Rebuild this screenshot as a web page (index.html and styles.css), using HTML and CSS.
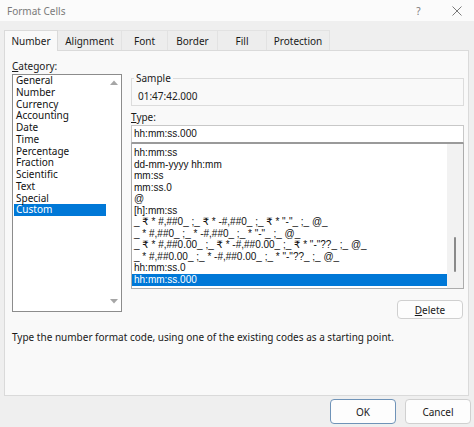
FILE: index.html
```html
<!DOCTYPE html>
<html>
<head>
<meta charset="utf-8">
<title>Format Cells</title>
<link rel="stylesheet" href="styles.css">
</head>
<body>
<div class="titlebar">
  <span class="title">Format Cells</span>
  <div class="tb-actions">
    <span class="tb-btn tb-help">?</span>
    <span class="tb-btn">
      <svg width="10" height="10" viewBox="0 0 10 10"><path d="M0.5 0.5 L9.5 9.5 M9.5 0.5 L0.5 9.5" stroke="#7a7a7a" stroke-width="1" fill="none"/></svg>
    </span>
  </div>
</div>
<div class="tabs">
  <div class="tab tab-active w-number">Number</div>
  <div class="tab w-align">Alignment</div>
  <div class="tab w-font">Font</div>
  <div class="tab w-border">Border</div>
  <div class="tab w-fill">Fill</div>
  <div class="tab w-prot">Protection</div>
</div>
<div class="panel">
  <div class="cols">
    <div class="left">
      <div class="label"><u>C</u>ategory:</div>
      <div class="catlist">
        <ul class="cat-items">
          <li>General</li>
          <li>Number</li>
          <li>Currency</li>
          <li>Accounting</li>
          <li>Date</li>
          <li>Time</li>
          <li>Percentage</li>
          <li>Fraction</li>
          <li>Scientific</li>
          <li>Text</li>
          <li>Special</li>
          <li class="sel">Custom</li>
        </ul>
        <div class="vscroll">
          <svg width="8" height="5" viewBox="0 0 8 5"><path d="M0 5 L4 0.5 L8 5 Z" fill="#a6a6a6"/></svg>
          <svg width="8" height="5" viewBox="0 0 8 5"><path d="M0 0 L4 4.5 L8 0 Z" fill="#a6a6a6"/></svg>
        </div>
      </div>
    </div>
    <div class="right">
      <fieldset class="sample">
        <legend>Sample</legend>
        <div class="sample-value">01:47:42.000</div>
      </fieldset>
      <div class="label type-label"><u>T</u>ype:</div>
      <div class="typeinput">hh:mm:ss.000</div>
      <div class="typelist">
        <ul class="type-items">
          <li>hh:mm:ss</li>
          <li>dd-mm-yyyy hh:mm</li>
          <li>mm:ss</li>
          <li>mm:ss.0</li>
          <li>@</li>
          <li>[h]:mm:ss</li>
          <li>_ ₹ * #,##0_ ;_ ₹ * -#,##0_ ;_ ₹ * "-"_ ;_ @_</li>
          <li>_ * #,##0_ ;_ * -#,##0_ ;_ * "-"_ ;_ @_</li>
          <li>_ ₹ * #,##0.00_ ;_ ₹ * -#,##0.00_ ;_ ₹ * "-"??_ ;_ @_</li>
          <li>_ * #,##0.00_ ;_ * -#,##0.00_ ;_ * "-"??_ ;_ @_</li>
          <li>hh:mm:ss.0</li>
          <li class="sel">hh:mm:ss.000</li>
        </ul>
        <div class="thin-track"><div class="thumb"></div></div>
      </div>
      <div class="btnrow">
        <button class="btn btn-delete"><u>D</u>elete</button>
      </div>
    </div>
  </div>
  <p class="help">Type the number format code, using one of the existing codes as a starting point.</p>
</div>
<div class="footer">
  <button class="btn btn-ok">OK</button>
  <button class="btn btn-cancel">Cancel</button>
</div>
</body>
</html>
```
FILE: styles.css
```css
* { box-sizing: border-box; }

body {
  margin: 0;
  width: 474px;
  height: 427px;
  overflow: hidden;
  background: #efefef;
  font-family: "Noto Sans", "Open Sans", sans-serif;
  font-size: 10px;
  color: #1a1a1a;
}

u { text-decoration: underline; text-underline-offset: 1px; }

.titlebar {
  height: 21px;
  background: #fbfbfb;
  display: flex;
  align-items: center;
  padding-left: 7px;
  padding-right: 7px;
}

.title {
  color: #7a7a7a;
  font-size: 10px;
}

.tb-actions {
  margin-left: auto;
  display: flex;
  gap: 20px;
}

.tb-btn {
  width: 20px;
  height: 20px;
  display: flex;
  align-items: center;
  justify-content: center;
  color: #7a7a7a;
}

.tb-help { font-size: 10px; padding-left: 3px; }

.tabs {
  display: flex;
  align-items: flex-start;
  padding: 9px 0 0 4px;
  height: 30px;
}

.tab {
  height: 20px;
  display: flex;
  align-items: center;
  justify-content: center;
  background: #ededed;
  border-top: 1px solid #e2e2e2;
  border-right: 1px solid #e2e2e2;
  color: #1a1a1a;
}

.tab-active {
  height: 21px;
  padding-bottom: 1px;
  background: #f9f9f9;
  border: 1px solid #dadada;
  border-bottom: none;
  position: relative;
  z-index: 1;
}

.w-number { width: 54px; }
.w-align { width: 64px; }
.w-font { width: 46px; }
.w-border { width: 50px; }
.w-fill { width: 49px; }
.w-prot { width: 63px; }

.panel {
  margin-top: -1px;
  margin-left: 4px;
  width: 465px;
  height: 346px;
  background: #f9f9f9;
  border: 1px solid #dadada;
  padding: 8px 4px 0 7px;
}

.cols {
  display: grid;
  grid-template-columns: 110px 333px;
  column-gap: 9px;
}

.label {
  line-height: 14px;
  height: 14px;
}

.catlist {
  margin-top: 1px;
  height: 238px;
  background: #fff;
  border: 1px solid #8c8c8c;
  display: flex;
}

.cat-items {
  list-style: none;
  margin: 0;
  padding: 0 0 0 1px;
  flex: 1;
}

.cat-items li {
  height: 11.75px;
  line-height: 11.75px;
  padding-left: 2px;
  color: #111;
  white-space: nowrap;
}

.cat-items li.sel,
.type-items li.sel {
  background: #0078d7;
  color: #fff;
}

.vscroll {
  width: 15px;
  display: flex;
  flex-direction: column;
  justify-content: space-between;
  align-items: center;
  padding: 5px 0 7px;
}

.vscroll svg { display: block; }

.sample {
  margin: 13px 0 0;
  padding: 5px 6px 2px 6px;
  border: 1px solid #dcdcdc;
  min-width: 0;
}

.sample legend {
  margin-left: -4px;
  padding: 0 2px;
  line-height: 12px;
  height: 12px;
}

.sample-value {
  line-height: 14px;
  height: 14px;
  color: #222;
}

.type-label { margin-top: 4px; }

.typeinput {
  margin-top: 1px;
  height: 18px;
  background: #fff;
  border: 1px solid #c8c8c8;
  border-bottom-color: #9a9a9a;
  padding-left: 2px;
  font-family: "Liberation Sans", Arial, sans-serif;
  font-size: 10px;
  line-height: 16px;
  color: #111;
}

.typelist {
  height: 146px;
  background: #fff;
  border: 1px solid #acacac;
  border-top-color: #9a9a9a;
  display: flex;
}

.type-items {
  list-style: none;
  margin: 0;
  padding: 3px 0 0 0;
  flex: 1;
  font-family: "Liberation Sans", Arial, "DejaVu Sans", sans-serif;
  font-size: 10px;
}

.type-items li {
  height: 11.55px;
  line-height: 11.55px;
  padding-left: 2px;
  white-space: pre;
  color: #111;
}

.thin-track {
  width: 16px;
  background: #f2f2f2;
  display: flex;
  justify-content: center;
  padding-top: 93px;
}

.thumb {
  width: 2px;
  height: 35px;
  border-radius: 1px;
  background: #8a8a8a;
}

.btnrow {
  display: flex;
  justify-content: flex-end;
  padding-right: 1px;
  margin-top: 11px;
}

.btn {
  height: 19px;
  width: 66px;
  padding: 0;
  background: #fdfdfd;
  border: 1px solid #d0d0d0;
  border-radius: 4px;
  font-family: "Noto Sans", "Open Sans", sans-serif;
  font-size: 10px;
  color: #1a1a1a;
}

.help {
  margin: 11px 0 0;
  line-height: 14px;
  color: #1a1a1a;
}

.footer {
  display: flex;
  justify-content: flex-end;
  gap: 9px;
  padding: 3px 3px 0 0;
}

.btn-ok,
.btn-cancel {
  height: 25px;
}

.btn-ok {
  border-color: #6f93b8;
}
```
